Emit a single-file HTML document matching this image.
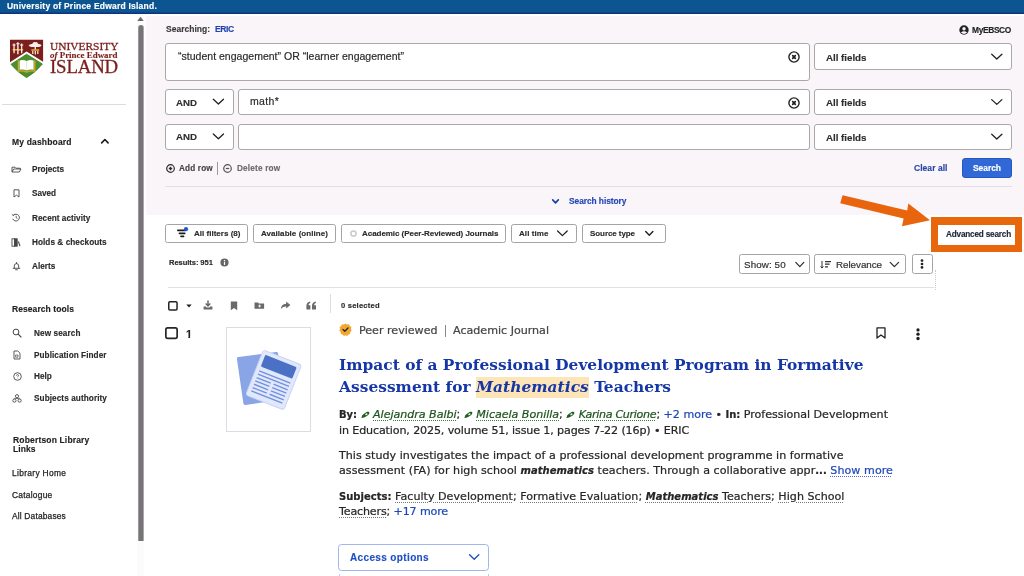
<!DOCTYPE html>
<html lang="en"><head><meta charset="utf-8"><title>EBSCO Advanced search - University of Prince Edward Island</title>
<style>
html,body{margin:0;padding:0;background:#fff;}
body{width:1024px;height:576px;position:relative;overflow:hidden;font-family:"Liberation Sans","DejaVu Sans",sans-serif;}
.t{position:absolute;white-space:nowrap;margin:0;padding:0;will-change:transform;}
.b{position:absolute;box-sizing:border-box;}
svg{position:absolute;overflow:visible;}
.u,.ug,.ub{text-decoration:underline dotted;text-decoration-thickness:1px;text-underline-offset:1.6px;}
.u{text-decoration-color:#777;}
.ug{text-decoration-color:#3b7a3b;}
.ub{text-decoration-color:#4a6fd0;}
.t{-webkit-text-stroke:0.14px currentColor;}
.d{-webkit-text-stroke:0.22px currentColor;}
.d b{font-size:0.9em;}
</style></head><body>
<div class="b" style="left:0px;top:0px;width:1024px;height:13px;background:#0d5590;"></div>
<div class="b" style="left:0px;top:12px;width:1024px;height:1px;background:#0b4587;"></div>
<div class="b" style="left:0px;top:13px;width:1024px;height:1px;background:#0c357d;"></div>
<div class="b" style="left:146px;top:16px;width:878px;height:199px;background:#faf5f9;"></div>
<div class="b" style="left:137px;top:14px;width:7px;height:562px;background:#fbfbfb;"></div>
<div class="b" style="left:138px;top:25px;width:6px;height:516px;background:#767476;border-radius:3px 3px 0 0;border-left:1px solid #9a9a9a;border-right:1px solid #a8a8a8;"></div>
<svg style="left:137px;top:16px" width="7" height="6" viewBox="0 0 7 6"><polygon points="0.3,5 3.5,0.8 6.7,5" fill="#686868"/></svg>
<svg style="left:9px;top:39px" width="36" height="40" viewBox="0 0 36 40">
<path d="M1,0.8 H34.1 V22.8 L17.6,12.6 L1,23.2 Z" fill="#7c1e1b"/>
<path d="M17.6,15.2 L33.4,25 Q26.5,33.5 17.6,38.6 Q8.6,33.5 2,25.3 Z" fill="#4d8f2d" stroke="#3c7d24" stroke-width="0.8" stroke-linejoin="round"/>
<path d="M9.4,21.6 v10.6 q4.2,-1 8.2,0.9 q4,-1.9 8.2,-0.9 v-10.6" fill="none" stroke="#dba722" stroke-width="1.3"/>
<path d="M10.6,21.4 q3.5,-0.9 7,0.5 q3.5,-1.4 7,-0.5 v9.3 q-3.5,-0.8 -7,0.8 q-3.5,-1.6 -7,-0.8 z" fill="#fff"/>
<path d="M17.6,21.9 v9.8" stroke="#d8d2c0" stroke-width="0.6"/>
<rect x="3.6" y="10" width="10.6" height="1.5" fill="#eaab20"/>
<path d="M4.4,4.6 h1.3 v9.6 h-1.3z M8.2,3.2 h1.4 v12 h-1.4z M12,4.6 h1.3 v9.6 h-1.3z M3.4,5.4 h3.3 v1 h-3.3z M7.2,4.2 h3.4 v1 h-3.4z M11,5.4 h3.3 v1 h-3.3z" fill="#f6eeee"/>
<path d="M19.6,6.6 q1.2,-2 3.6,-1.6 q0.8,-2.4 3.2,-1.8 q2,-0.6 2.8,1.8 q2.6,-0.4 3.4,1.6 q-1.2,1.8 -3.6,1.4 h-5.8 q-2.4,0.4 -3.6,-1.4z" fill="#f6eeee"/>
<rect x="22.4" y="10.2" width="7.8" height="1.6" fill="#eaab20"/>
<path d="M23.2,12 h1.2 v3 h-1.2z M25.7,12 h1.2 v3.4 h-1.2z M28.2,12 h1.2 v3 h-1.2z M25.6,7.6 h1.4 v2.6 h-1.4z" fill="#f6eeee"/>
</svg>
<div class="b" style="left:2px;top:104px;width:124px;height:1px;background:#dcdcdc;"></div>
<svg style="left:0;top:0" width="1024" height="576"><polyline points="101.7,142.85 104.9,139.54999999999998 108.10000000000001,142.85" fill="none" stroke="#1a1a1a" stroke-width="1.6" stroke-linecap="round" stroke-linejoin="round"/></svg>
<svg style="left:11px;top:165px" width="11" height="8" viewBox="0 0 11 8"><path d="M1,2.2 h3 l1,1 h4.2 v0.9 M1,2.2 v4.8 h7.3 l1.7,-3 h-7.4 l-1.6,3" fill="none" stroke="#484848" stroke-width="0.9" stroke-linejoin="round"/></svg>
<svg style="left:13px;top:189px" width="7" height="9" viewBox="0 0 7 9"><path d="M1,0.8 h5 v7.2 l-2.5,-1.8 l-2.5,1.8 z" fill="none" stroke="#484848" stroke-width="0.9" stroke-linejoin="round"/></svg>
<svg style="left:11px;top:213px" width="10" height="9" viewBox="0 0 10 9"><path d="M2.4,2.4 a3.4,3.4 0 1 1 -0.6,3.4" fill="none" stroke="#484848" stroke-width="0.9"/><path d="M0.8,1.4 l1.7,1.3 l1,-1.8" fill="none" stroke="#484848" stroke-width="0.8"/><path d="M5.2,2.8 v2 l1.3,0.9" fill="none" stroke="#484848" stroke-width="0.8"/></svg>
<svg style="left:11px;top:237.5px" width="10" height="9" viewBox="0 0 10 9"><rect x="1" y="0.8" width="2.6" height="7.4" fill="none" stroke="#484848" stroke-width="0.9"/><rect x="3.6" y="0.8" width="2.6" height="7.4" fill="#484848" stroke="#484848" stroke-width="0.9"/><path d="M7.4,3.5 l1.6,4.6" stroke="#484848" stroke-width="1.1"/></svg>
<svg style="left:12px;top:261.5px" width="9" height="9" viewBox="0 0 9 9"><path d="M1.2,6.3 h6.6 M2.3,6.2 v-2.2 a2.2,2.4 0 0 1 4.4,0 v2.2 M4.5,1.5 v-1 M3.6,7.8 h1.8" fill="none" stroke="#484848" stroke-width="0.9" stroke-linecap="round"/></svg>
<svg style="left:12px;top:328px" width="10" height="10" viewBox="0 0 10 10"><circle cx="4" cy="4" r="2.9" fill="none" stroke="#484848" stroke-width="1"/><path d="M6.2,6.2 l2.8,2.8" stroke="#484848" stroke-width="1.1" stroke-linecap="round"/></svg>
<svg style="left:13px;top:350px" width="8" height="10" viewBox="0 0 8 10"><path d="M1,1 h3.8 l2.2,2.2 v5.8 h-6 z" fill="none" stroke="#484848" stroke-width="0.9" stroke-linejoin="round"/><path d="M2.6,5 h2.4 v2.2 h-2.4z" fill="none" stroke="#484848" stroke-width="0.7"/></svg>
<svg style="left:12.5px;top:372.3px" width="9" height="9" viewBox="0 0 9 9"><circle cx="4.5" cy="4.5" r="3.8" fill="none" stroke="#484848" stroke-width="0.9"/><path d="M3.5,3.6 a1,1 0 1 1 1.4,0.9 l-0.2,0.7 M4.6,6.4 v0.4" fill="none" stroke="#484848" stroke-width="0.8"/></svg>
<svg style="left:12px;top:393.5px" width="10" height="9" viewBox="0 0 10 9"><circle cx="5" cy="2.2" r="1.6" fill="none" stroke="#484848" stroke-width="0.9"/><circle cx="2.4" cy="6.6" r="1.6" fill="none" stroke="#484848" stroke-width="0.9"/><circle cx="7.6" cy="6.6" r="1.6" fill="none" stroke="#484848" stroke-width="0.9"/><path d="M5,3.8 v1 M2.4,5 v-0.6 h5.2 v0.6" fill="none" stroke="#484848" stroke-width="0.7"/></svg>
<svg style="left:959px;top:24.5px" width="10" height="10" viewBox="0 0 10 10"><circle cx="5" cy="5" r="4.7" fill="#222"/><circle cx="5" cy="3.7" r="1.7" fill="#f9f4f9"/><path d="M1.9,7.6 q3.1,-2.6 6.2,0 q-3.1,2.6 -6.2,0z" fill="#f9f4f9"/></svg>
<div class="b" style="left:165px;top:43px;width:645px;height:37.5px;background:#fff;border:1px solid #a9a9a9;border-radius:3px;"></div>
<div class="b" style="left:814px;top:43px;width:198px;height:26.5px;background:#fff;border:1px solid #a9a9a9;border-radius:3px;"></div>
<svg style="left:0;top:0" width="1024" height="576"><polyline points="991.6999999999999,54.2 996.8,59.0 1001.9,54.2" fill="none" stroke="#222" stroke-width="1.3" stroke-linecap="round" stroke-linejoin="round"/></svg>
<div class="b" style="left:165px;top:89px;width:68.5px;height:26px;background:#fff;border:1px solid #a9a9a9;border-radius:3px;"></div>
<svg style="left:0;top:0" width="1024" height="576"><polyline points="213.3,99.19999999999999 218.4,104.0 223.5,99.19999999999999" fill="none" stroke="#222" stroke-width="1.3" stroke-linecap="round" stroke-linejoin="round"/></svg>
<div class="b" style="left:238px;top:89px;width:572px;height:26px;background:#fff;border:1px solid #a9a9a9;border-radius:3px;"></div>
<div class="b" style="left:814px;top:89px;width:198px;height:26px;background:#fff;border:1px solid #a9a9a9;border-radius:3px;"></div>
<svg style="left:0;top:0" width="1024" height="576"><polyline points="991.6999999999999,99.6 996.8,104.4 1001.9,99.6" fill="none" stroke="#222" stroke-width="1.3" stroke-linecap="round" stroke-linejoin="round"/></svg>
<div class="b" style="left:165px;top:123.5px;width:68.5px;height:26.5px;background:#fff;border:1px solid #a9a9a9;border-radius:3px;"></div>
<svg style="left:0;top:0" width="1024" height="576"><polyline points="213.3,134.0 218.4,138.8 223.5,134.0" fill="none" stroke="#222" stroke-width="1.3" stroke-linecap="round" stroke-linejoin="round"/></svg>
<div class="b" style="left:238px;top:123.5px;width:572px;height:26.5px;background:#fff;border:1px solid #a9a9a9;border-radius:3px;"></div>
<div class="b" style="left:814px;top:123.5px;width:198px;height:26.5px;background:#fff;border:1px solid #a9a9a9;border-radius:3px;"></div>
<svg style="left:0;top:0" width="1024" height="576"><polyline points="991.6999999999999,134.2 996.8,139.0 1001.9,134.2" fill="none" stroke="#222" stroke-width="1.3" stroke-linecap="round" stroke-linejoin="round"/></svg>
<svg style="left:787.5px;top:51px" width="12" height="12" viewBox="0 0 12 12"><circle cx="6" cy="6" r="5.1" fill="none" stroke="#222" stroke-width="1.4"/><path d="M4.7,4.7 l2.6,2.6 M7.3,4.7 l-2.6,2.6" stroke="#222" stroke-width="1.7" stroke-linecap="round"/></svg>
<svg style="left:787.5px;top:97px" width="12" height="12" viewBox="0 0 12 12"><circle cx="6" cy="6" r="5.1" fill="none" stroke="#222" stroke-width="1.4"/><path d="M4.7,4.7 l2.6,2.6 M7.3,4.7 l-2.6,2.6" stroke="#222" stroke-width="1.7" stroke-linecap="round"/></svg>
<svg style="left:165.5px;top:163.7px" width="9" height="9" viewBox="0 0 9 9"><circle cx="4.5" cy="4.5" r="3.8" fill="none" stroke="#2a2a2a" stroke-width="1.2"/><path d="M2.8,4.5 h3.4 M4.5,2.8 v3.4" stroke="#2a2a2a" stroke-width="1.3"/></svg>
<div class="b" style="left:217px;top:162px;width:1px;height:13px;background:#9a9a9a;"></div>
<svg style="left:222.5px;top:163.7px" width="9" height="9" viewBox="0 0 9 9"><circle cx="4.5" cy="4.5" r="3.8" fill="none" stroke="#555" stroke-width="1.2"/><path d="M2.8,4.5 h3.4" stroke="#555" stroke-width="1.3"/></svg>
<div class="b" style="left:962px;top:158px;width:50px;height:20px;background:#3268d6;border:1px solid #2358c6;border-radius:3px;"></div>
<div class="b" style="left:165px;top:186px;width:846.5px;height:1px;background:#e4dde4;"></div>
<svg style="left:0;top:0" width="1024" height="576"><polyline points="552.7,199.8 555.5,202.8 558.3,199.8" fill="none" stroke="#1f41ad" stroke-width="1.7" stroke-linecap="round" stroke-linejoin="round"/></svg>
<svg style="left:0;top:0" width="1024" height="576"><polygon points="842.6,195.2 907.2,210.6 908.3,203.4 930,220.2 902,226.2 903.6,218.6 840.2,203.2" fill="#e8650e"/></svg>
<div class="b" style="left:931px;top:217px;width:91px;height:35px;background:#fff;border:7px solid #e8660c;border-top-width:8px;"></div>
<div class="b" style="left:165px;top:224px;width:83px;height:19px;background:#fff;border:1px solid #a4a4a4;border-radius:2.5px;"></div>
<svg style="left:176.5px;top:227px" width="12" height="12" viewBox="0 0 12 12"><path d="M0.8,3.4 h7.6 M2.4,6.4 h5.4 M4,9.4 h2.6" stroke="#1c1c1c" stroke-width="1.6" stroke-linecap="round"/><circle cx="9" cy="2.2" r="2.1" fill="#1d55d8"/></svg>
<div class="b" style="left:253px;top:224px;width:83px;height:19px;background:#fff;border:1px solid #a4a4a4;border-radius:2.5px;"></div>
<div class="b" style="left:341.3px;top:224px;width:164.7px;height:19px;background:#fff;border:1px solid #a4a4a4;border-radius:2.5px;"></div>
<svg style="left:349.5px;top:230.3px" width="7" height="7" viewBox="0 0 7 7"><circle cx="3.5" cy="3.5" r="2.6" fill="none" stroke="#c9c9c9" stroke-width="1.5"/></svg>
<div class="b" style="left:511px;top:224px;width:66.20000000000005px;height:19px;background:#fff;border:1px solid #a4a4a4;border-radius:2.5px;"></div>
<svg style="left:0;top:0" width="1024" height="576"><polyline points="557.6,231.0 562.4,235.60000000000002 567.1999999999999,231.0" fill="none" stroke="#222" stroke-width="1.3" stroke-linecap="round" stroke-linejoin="round"/></svg>
<div class="b" style="left:582px;top:224px;width:84px;height:19px;background:#fff;border:1px solid #a4a4a4;border-radius:2.5px;"></div>
<svg style="left:0;top:0" width="1024" height="576"><polyline points="645.6999999999999,231.4 649.3,235.20000000000002 652.9,231.4" fill="none" stroke="#222" stroke-width="1.4" stroke-linecap="round" stroke-linejoin="round"/></svg>
<svg style="left:220px;top:258.3px" width="9" height="9" viewBox="0 0 9 9"><circle cx="4.5" cy="4.5" r="4.1" fill="#666"/><rect x="3.9" y="3.9" width="1.2" height="3" fill="#fff"/><rect x="3.9" y="2" width="1.2" height="1.2" fill="#fff"/></svg>
<div class="b" style="left:738.5px;top:254px;width:71.20000000000005px;height:20px;background:#fff;border:1px solid #a4a4a4;border-radius:2.5px;"></div>
<svg style="left:0;top:0" width="1024" height="576"><polyline points="795.8,262.4 799.8,266.6 803.8,262.4" fill="none" stroke="#333" stroke-width="1.3" stroke-linecap="round" stroke-linejoin="round"/></svg>
<div class="b" style="left:814.4px;top:254px;width:92.10000000000002px;height:20px;background:#fff;border:1px solid #a4a4a4;border-radius:2.5px;"></div>
<svg style="left:819.5px;top:259.5px" width="12" height="10" viewBox="0 0 12 10"><path d="M2,1 v7 M0.6,6.4 l1.4,1.7 l1.4,-1.7" fill="none" stroke="#333" stroke-width="1"/><path d="M5,1.6 h6 M5,4.2 h4.6 M5,6.8 h3" stroke="#333" stroke-width="1.2"/></svg>
<svg style="left:0;top:0" width="1024" height="576"><polyline points="890.1999999999999,262.4 894.4,266.6 898.6,262.4" fill="none" stroke="#333" stroke-width="1.3" stroke-linecap="round" stroke-linejoin="round"/></svg>
<div class="b" style="left:911.5px;top:254px;width:21.799999999999955px;height:20px;background:#fff;border:1px solid #a4a4a4;border-radius:2.5px;"></div>
<svg style="left:920.4px;top:259.3px" width="4" height="10" viewBox="0 0 4 10"><circle cx="2" cy="1.6" r="1.35" fill="#222"/><circle cx="2" cy="5" r="1.35" fill="#222"/><circle cx="2" cy="8.4" r="1.35" fill="#222"/></svg>
<div class="b" style="left:168px;top:286.5px;width:766px;height:1.0px;background:#e3dfe6;"></div>
<div class="b" style="left:935px;top:270px;width:0;height:20px;border-left:1px dotted #c8c8c8"></div>
<svg style="left:167.6px;top:300.6px" width="10" height="10" viewBox="0 0 10 10"><rect x="0.75" y="0.75" width="8.3" height="8.3" rx="1.2" fill="#fff" stroke="#242424" stroke-width="1.5"/></svg>
<svg style="left:186px;top:304px" width="6" height="4" viewBox="0 0 6 4"><polygon points="0.3,0.5 5.7,0.5 3,3.5" fill="#222"/></svg>
<svg style="left:203px;top:300px" width="10" height="10" viewBox="0 0 10 10"><path d="M5,0.6 v4.8 M2.7,3.5 l2.3,2.4 l2.3,-2.4" fill="none" stroke="#6a6a6a" stroke-width="1.5"/><path d="M0.6,6.6 h2.2 l1,1 h2.4 l1,-1 h2.2 v2.8 h-8.8 z" fill="#6a6a6a"/></svg>
<svg style="left:230px;top:300.5px" width="8" height="10" viewBox="0 0 8 10"><path d="M0.8,0.5 h6.4 v8.7 l-3.2,-2.2 l-3.2,2.2 z" fill="#6a6a6a"/></svg>
<svg style="left:254px;top:302px" width="11" height="8" viewBox="0 0 11 8"><path d="M0.5,0.6 h3.4 l1,1 h5.2 v5.2 h-9.6 z" fill="#6a6a6a"/><path d="M5.6,2.6 v2.8 M4.2,4 h2.8" stroke="#fff" stroke-width="0.9"/></svg>
<svg style="left:280px;top:300.5px" width="11" height="9" viewBox="0 0 11 9"><path d="M6.2,0.6 l4.2,3.5 l-4.2,3.5 v-2.1 q-3.6,-0.3 -5.4,2.6 q0.3,-4.9 5.4,-5.4 z" fill="#6a6a6a"/></svg>
<svg style="left:305.5px;top:300.6px" width="11" height="9" viewBox="0 0 11 9"><path d="M0.4,8.6 v-4 q0,-3.4 3.8,-4.2 v1.7 q-1.7,0.5 -1.7,2.2 h1.9 v4.3 z M6,8.6 v-4 q0,-3.4 3.8,-4.2 v1.7 q-1.7,0.5 -1.7,2.2 h1.9 v4.3 z" fill="#6a6a6a"/></svg>
<div class="b" style="left:330px;top:294px;width:1px;height:19px;background:#ddd;"></div>
<svg style="left:165px;top:327px" width="13" height="12.4" viewBox="0 0 13 12.4"><rect x="0.85" y="0.85" width="11.3" height="10.5" rx="1.8" fill="#fff" stroke="#26262c" stroke-width="1.7"/></svg>
<div class="b" style="left:225.8px;top:327px;width:85.5px;height:105px;background:#fff;border:1px solid #dfdbe4;"></div>
<svg style="left:225.8px;top:327px" width="86" height="105" viewBox="0 0 86 105">
<path d="M12.4,30 L50.2,24.9 Q51.8,24.7 52,26.3 L58.6,72 L19.4,78 Q17.6,78.2 17.4,76.6 L10.9,31.8 Q10.7,30.2 12.4,30 Z" fill="#89a5e5"/>
<g transform="translate(37.4,22.9) rotate(21.5)">
<rect x="0" y="0" width="41" height="48.4" rx="2.6" fill="#e2e8fb" stroke="#c6d2f6" stroke-width="0.9"/>
<rect x="3.6" y="3.8" width="33.8" height="12.6" rx="1.4" fill="#4b71c7"/>
<g stroke="#7191de" stroke-width="1.35">
<path d="M3.8,21 h33.4 M3.8,24.6 h33.4 M3.8,28.2 h15.2 M22,28.2 h15.2 M3.8,31.8 h15.2 M22,31.8 h15.2 M3.8,35.4 h15.2 M22,35.4 h15.2 M3.8,39 h15.2 M22,39 h15.2 M3.8,42.6 h33.4"/>
</g></g></svg>
<svg style="left:338.5px;top:322.8px" width="13" height="13" viewBox="0 0 13 13"><path d="M6.5,0.4 l1.6,1 1.9,-0.1 0.8,1.7 1.6,1 -0.4,1.9 0.6,1.8 -1.3,1.4 -0.2,1.9 -1.8,0.5 -1.2,1.5 -1.6,-0.7 -1.6,0.7 -1.2,-1.5 -1.8,-0.5 -0.2,-1.9 -1.3,-1.4 0.6,-1.8 -0.4,-1.9 1.6,-1 0.8,-1.7 1.9,0.1 z" fill="#f2a72d"/><path d="M4,6.5 l1.8,1.8 l3.2,-3.4" fill="none" stroke="#2a2a3a" stroke-width="1.4" stroke-linecap="round" stroke-linejoin="round"/></svg>
<div class="b" style="left:444.5px;top:324.5px;width:1.0px;height:12.0px;background:#888;"></div>
<svg style="left:876px;top:327.3px" width="10" height="12" viewBox="0 0 10 12"><path d="M1,0.8 h8 v10.2 l-4,-3 l-4,3 z" fill="none" stroke="#222" stroke-width="1.3" stroke-linejoin="round"/></svg>
<svg style="left:915.5px;top:327.5px" width="4" height="12" viewBox="0 0 4 12"><circle cx="2" cy="1.9" r="1.65" fill="#1c1c1c"/><circle cx="2" cy="6.2" r="1.65" fill="#1c1c1c"/><circle cx="2" cy="10.5" r="1.65" fill="#1c1c1c"/></svg>
<div class="b" style="left:338px;top:544px;width:151px;height:27px;background:#fff;border:1px solid #9fb6ee;border-radius:3.5px;"></div>
<svg style="left:0;top:0" width="1024" height="576"><polyline points="469.59999999999997,554.85 474.2,559.15 478.8,554.85" fill="none" stroke="#1f4fc0" stroke-width="1.4" stroke-linecap="round" stroke-linejoin="round"/></svg>
<div class="b" style="left:338.5px;top:574px;width:1.0px;height:2px;background:#b9c9f2;"></div>
<div class="b" style="left:488px;top:574px;width:1px;height:2px;background:#b9c9f2;"></div>
<div class="t" style="left:7.00px;top:0px;font:normal bold 8.5px/12px 'Liberation Sans', 'DejaVu Sans', sans-serif;color:#fff;letter-spacing:0.223px;">University of Prince Edward Island.</div>
<div class="t" style="left:49.50px;top:39px;font:normal normal 11.4px/14px 'Liberation Serif', 'DejaVu Serif', serif;color:#7a1d1b;letter-spacing:0.016px;-webkit-text-stroke:0.3px #7a1d1b;">UNIVERSITY</div>
<div class="t" style="left:50.00px;top:49px;font:normal bold 8.9px/12px 'Liberation Serif', 'DejaVu Serif', serif;color:#7a1d1b;letter-spacing:0.027px;"><i>of</i> Prince Edward</div>
<div class="t" style="left:50.00px;top:55px;font:normal normal 18.8px/23px 'Liberation Serif', 'DejaVu Serif', serif;color:#7a1d1b;letter-spacing:-0.146px;-webkit-text-stroke:0.3px #7a1d1b;">ISLAND</div>
<div class="t" style="left:11.70px;top:136px;font:normal bold 8.5px/12px 'Liberation Sans', 'DejaVu Sans', sans-serif;color:#1f1f1f;letter-spacing:0.173px;">My dashboard</div>
<div class="t" style="left:32.00px;top:164px;font:normal bold 8.2px/11px 'Liberation Sans', 'DejaVu Sans', sans-serif;color:#2a2a2a;letter-spacing:-0.039px;">Projects</div>
<div class="t" style="left:32.00px;top:188px;font:normal bold 8.2px/11px 'Liberation Sans', 'DejaVu Sans', sans-serif;color:#2a2a2a;letter-spacing:0.000px;">Saved</div>
<div class="t" style="left:32.00px;top:213px;font:normal bold 8.2px/11px 'Liberation Sans', 'DejaVu Sans', sans-serif;color:#2a2a2a;letter-spacing:0.040px;">Recent activity</div>
<div class="t" style="left:32.00px;top:237px;font:normal bold 8.2px/11px 'Liberation Sans', 'DejaVu Sans', sans-serif;color:#2a2a2a;letter-spacing:0.058px;">Holds &amp; checkouts</div>
<div class="t" style="left:32.00px;top:261px;font:normal bold 8.2px/11px 'Liberation Sans', 'DejaVu Sans', sans-serif;color:#2a2a2a;letter-spacing:0.000px;">Alerts</div>
<div class="t" style="left:12.00px;top:303px;font:normal bold 8.5px/12px 'Liberation Sans', 'DejaVu Sans', sans-serif;color:#1f1f1f;letter-spacing:0.075px;">Research tools</div>
<div class="t" style="left:33.50px;top:328px;font:normal bold 8.2px/11px 'Liberation Sans', 'DejaVu Sans', sans-serif;color:#2a2a2a;letter-spacing:0.098px;">New search</div>
<div class="t" style="left:33.50px;top:350px;font:normal bold 8.2px/11px 'Liberation Sans', 'DejaVu Sans', sans-serif;color:#2a2a2a;letter-spacing:0.060px;">Publication Finder</div>
<div class="t" style="left:33.50px;top:371px;font:normal bold 8.2px/11px 'Liberation Sans', 'DejaVu Sans', sans-serif;color:#2a2a2a;letter-spacing:0.000px;">Help</div>
<div class="t" style="left:33.50px;top:393px;font:normal bold 8.2px/11px 'Liberation Sans', 'DejaVu Sans', sans-serif;color:#2a2a2a;letter-spacing:0.087px;">Subjects authority</div>
<div class="t" style="left:12.50px;top:434px;font:normal bold 8.5px/12px 'Liberation Sans', 'DejaVu Sans', sans-serif;color:#1f1f1f;letter-spacing:0.165px;">Robertson Library</div>
<div class="t" style="left:12.50px;top:443px;font:normal bold 8.5px/12px 'Liberation Sans', 'DejaVu Sans', sans-serif;color:#1f1f1f;letter-spacing:0.059px;">Links</div>
<div class="t" style="left:12.00px;top:467px;font:normal normal 8.4px/12px 'Liberation Sans', 'DejaVu Sans', sans-serif;color:#222;letter-spacing:0.335px;-webkit-text-stroke:0.25px #222;">Library Home</div>
<div class="t" style="left:12.00px;top:489px;font:normal normal 8.4px/12px 'Liberation Sans', 'DejaVu Sans', sans-serif;color:#222;letter-spacing:0.257px;-webkit-text-stroke:0.25px #222;">Catalogue</div>
<div class="t" style="left:12.00px;top:510px;font:normal normal 8.4px/12px 'Liberation Sans', 'DejaVu Sans', sans-serif;color:#222;letter-spacing:0.178px;-webkit-text-stroke:0.25px #222;">All Databases</div>
<div class="t" style="left:166.00px;top:23px;font:normal bold 8.5px/12px 'Liberation Sans', 'DejaVu Sans', sans-serif;color:#3a3a3a;letter-spacing:0.006px;">Searching:</div>
<div class="t" style="left:215.00px;top:23px;font:normal bold 8.5px/12px 'Liberation Sans', 'DejaVu Sans', sans-serif;color:#2244b0;letter-spacing:-0.403px;">ERIC</div>
<div class="t" style="left:972.00px;top:24px;font:normal bold 8.4px/12px 'Liberation Sans', 'DejaVu Sans', sans-serif;color:#222;letter-spacing:-0.346px;">MyEBSCO</div>
<div class="t" style="left:177.50px;top:49px;font:normal normal 10.5px/14px 'Liberation Sans', 'DejaVu Sans', sans-serif;color:#2c2c2c;letter-spacing:0.016px;-webkit-text-stroke:0.2px #2c2c2c;">“student engagement” OR “learner engagement”</div>
<div class="t" style="left:825.50px;top:51px;font:normal bold 9.8px/13px 'Liberation Sans', 'DejaVu Sans', sans-serif;color:#2e2e2e;letter-spacing:-0.034px;">All fields</div>
<div class="t" style="left:176.30px;top:96px;font:normal bold 9.7px/13px 'Liberation Sans', 'DejaVu Sans', sans-serif;color:#2e2e2e;letter-spacing:0.000px;">AND</div>
<div class="t" style="left:250.00px;top:94px;font:normal normal 10.5px/14px 'Liberation Sans', 'DejaVu Sans', sans-serif;color:#2c2c2c;letter-spacing:0.352px;-webkit-text-stroke:0.2px #2c2c2c;">math*</div>
<div class="t" style="left:825.50px;top:96px;font:normal bold 9.8px/13px 'Liberation Sans', 'DejaVu Sans', sans-serif;color:#2e2e2e;letter-spacing:-0.034px;">All fields</div>
<div class="t" style="left:176.30px;top:130px;font:normal bold 9.7px/13px 'Liberation Sans', 'DejaVu Sans', sans-serif;color:#2e2e2e;letter-spacing:0.000px;">AND</div>
<div class="t" style="left:825.50px;top:131px;font:normal bold 9.8px/13px 'Liberation Sans', 'DejaVu Sans', sans-serif;color:#2e2e2e;letter-spacing:-0.034px;">All fields</div>
<div class="t" style="left:179.20px;top:163px;font:normal bold 8.2px/11px 'Liberation Sans', 'DejaVu Sans', sans-serif;color:#444;letter-spacing:0.150px;">Add row</div>
<div class="t" style="left:237.00px;top:163px;font:normal bold 8.2px/11px 'Liberation Sans', 'DejaVu Sans', sans-serif;color:#6a6a6a;letter-spacing:0.189px;">Delete row</div>
<div class="t" style="left:913.50px;top:162px;font:normal bold 8.5px/12px 'Liberation Sans', 'DejaVu Sans', sans-serif;color:#2747a8;letter-spacing:0.047px;">Clear all</div>
<div class="t" style="left:973.00px;top:162px;font:normal bold 8.5px/12px 'Liberation Sans', 'DejaVu Sans', sans-serif;color:#fff;letter-spacing:-0.060px;">Search</div>
<div class="t" style="left:569.00px;top:195px;font:normal bold 8.4px/12px 'Liberation Sans', 'DejaVu Sans', sans-serif;color:#2247b5;letter-spacing:-0.056px;">Search history</div>
<div class="t" style="left:946.00px;top:229px;font:normal bold 8.2px/11px 'Liberation Sans', 'DejaVu Sans', sans-serif;color:#1c2238;letter-spacing:-0.188px;">Advanced search</div>
<div class="t" style="left:193.50px;top:228px;font:normal bold 8px/11px 'Liberation Sans', 'DejaVu Sans', sans-serif;color:#2a2a2a;letter-spacing:0.018px;">All filters (8)</div>
<div class="t" style="left:261.00px;top:228px;font:normal bold 8px/11px 'Liberation Sans', 'DejaVu Sans', sans-serif;color:#2a2a2a;letter-spacing:0.059px;">Available (online)</div>
<div class="t" style="left:361.60px;top:228px;font:normal bold 8px/11px 'Liberation Sans', 'DejaVu Sans', sans-serif;color:#2a2a2a;letter-spacing:-0.044px;">Academic (Peer-Reviewed) Journals</div>
<div class="t" style="left:519.20px;top:228px;font:normal bold 8px/11px 'Liberation Sans', 'DejaVu Sans', sans-serif;color:#2a2a2a;letter-spacing:0.074px;">All time</div>
<div class="t" style="left:590.20px;top:228px;font:normal bold 8px/11px 'Liberation Sans', 'DejaVu Sans', sans-serif;color:#2a2a2a;letter-spacing:-0.072px;">Source type</div>
<div class="t" style="left:169.00px;top:257px;font:normal bold 7.6px/11px 'Liberation Sans', 'DejaVu Sans', sans-serif;color:#2a2a2a;letter-spacing:-0.079px;">Results: 951</div>
<div class="t" style="left:744.30px;top:258px;font:normal normal 9.8px/13px 'Liberation Sans', 'DejaVu Sans', sans-serif;color:#333;letter-spacing:0.105px;-webkit-text-stroke:0.2px #333;">Show: 50</div>
<div class="t" style="left:836.40px;top:258px;font:normal normal 9.8px/13px 'Liberation Sans', 'DejaVu Sans', sans-serif;color:#333;letter-spacing:-0.033px;-webkit-text-stroke:0.2px #333;">Relevance</div>
<div class="t" style="left:340.50px;top:300px;font:normal bold 7.6px/11px 'Liberation Sans', 'DejaVu Sans', sans-serif;color:#2a2a2a;letter-spacing:0.207px;">0 selected</div>
<div class="t" style="left:185.60px;top:327px;font:normal bold 10.9px/14px 'Liberation Sans', 'DejaVu Sans', sans-serif;color:#222;letter-spacing:0.000px;clip-path:polygon(0 0,100% 0,100% 64%,68% 64%,68% 100%,38% 100%,38% 64%,0 64%);">1</div>
<div class="t d" style="left:359.30px;top:323px;font:normal normal 11.1px/15px 'DejaVu Sans', 'Liberation Sans', sans-serif;color:#444;letter-spacing:-0.007px;">Peer reviewed</div>
<div class="t d" style="left:453.00px;top:323px;font:normal normal 11.1px/15px 'DejaVu Sans', 'Liberation Sans', sans-serif;color:#444;letter-spacing:-0.003px;">Academic Journal</div>
<div class="t" style="left:339.00px;top:355px;font:normal bold 15.4px/20px 'DejaVu Serif', 'Liberation Serif', serif;color:#1536a6;letter-spacing:0.017px;-webkit-text-stroke:0;">Impact of a Professional Development Program in Formative</div>
<div class="t" style="left:339.00px;top:377px;font:normal bold 15.4px/20px 'DejaVu Serif', 'Liberation Serif', serif;color:#1536a6;letter-spacing:0.035px;-webkit-text-stroke:0;">Assessment for <span style="background:#fde5b7;font-style:italic;padding:1px 0 2px">Mathematics</span> Teachers</div>
<div class="t d" style="left:339.00px;top:407px;font:normal normal 11.1px/15px 'DejaVu Sans', 'Liberation Sans', sans-serif;color:#262626;letter-spacing:-0.029px;"><b>By:</b> <i style="color:#1a521a"><svg style="position:static;display:inline-block;vertical-align:-1px" width="9" height="8" viewBox="0 0 9 8"><path d="M0.4,7 q0.2,-3.4 3,-4.6 l2.6,-1.6 q2.4,-0.6 2.4,1.2 q-0.6,2.6 -3.4,3.6 q-2.2,1.6 -4.6,1.4z" fill="#1f5c1f"/><ellipse cx="5.4" cy="3.3" rx="1.3" ry="0.8" transform="rotate(-30 5.4 3.3)" fill="#eef5ee"/></svg> <span class="ug">Alejandra Balbi</span></i>; <i style="color:#1a521a"><svg style="position:static;display:inline-block;vertical-align:-1px" width="9" height="8" viewBox="0 0 9 8"><path d="M0.4,7 q0.2,-3.4 3,-4.6 l2.6,-1.6 q2.4,-0.6 2.4,1.2 q-0.6,2.6 -3.4,3.6 q-2.2,1.6 -4.6,1.4z" fill="#1f5c1f"/><ellipse cx="5.4" cy="3.3" rx="1.3" ry="0.8" transform="rotate(-30 5.4 3.3)" fill="#eef5ee"/></svg> <span class="ug">Micaela Bonilla</span></i>; <i style="color:#1a521a"><svg style="position:static;display:inline-block;vertical-align:-1px" width="9" height="8" viewBox="0 0 9 8"><path d="M0.4,7 q0.2,-3.4 3,-4.6 l2.6,-1.6 q2.4,-0.6 2.4,1.2 q-0.6,2.6 -3.4,3.6 q-2.2,1.6 -4.6,1.4z" fill="#1f5c1f"/><ellipse cx="5.4" cy="3.3" rx="1.3" ry="0.8" transform="rotate(-30 5.4 3.3)" fill="#eef5ee"/></svg> <span class="ug" style="letter-spacing:-0.3px">Karina Curione</span></i>; <span style="color:#1f49b8">+2 more</span> • <b>In:</b> Professional Development</div>
<div class="t d" style="left:339.00px;top:423px;font:normal normal 11.1px/15px 'DejaVu Sans', 'Liberation Sans', sans-serif;color:#262626;letter-spacing:-0.127px;">in Education, 2025, volume 51, issue 1, pages 7-22 (16p) • ERIC</div>
<div class="t d" style="left:339.00px;top:448px;font:normal normal 11.1px/15px 'DejaVu Sans', 'Liberation Sans', sans-serif;color:#262626;letter-spacing:0.022px;">This study investigates the impact of a professional development programme in formative</div>
<div class="t d" style="left:339.00px;top:463px;font:normal normal 11.1px/15px 'DejaVu Sans', 'Liberation Sans', sans-serif;color:#262626;letter-spacing:0.045px;">assessment (FA) for high school <b><i>mathematics</i></b> teachers. Through a collaborative appr<b>...</b> <span class="ub" style="color:#1f49b8">Show more</span></div>
<div class="t d" style="left:339.00px;top:489px;font:normal normal 11.1px/15px 'DejaVu Sans', 'Liberation Sans', sans-serif;color:#262626;letter-spacing:0.023px;"><b>Subjects:</b> <span class="u">Faculty Development</span>; <span class="u">Formative Evaluation</span>; <span class="u"><b><i>Mathematics</i></b> Teachers</span>; <span class="u">High School</span></div>
<div class="t d" style="left:339.00px;top:504px;font:normal normal 11.1px/15px 'DejaVu Sans', 'Liberation Sans', sans-serif;color:#262626;letter-spacing:-0.154px;"><span class="u">Teachers</span>; <span style="color:#1f49b8">+17 more</span></div>
<div class="t" style="left:350.00px;top:551px;font:normal bold 10px/13px 'Liberation Sans', 'DejaVu Sans', sans-serif;color:#1f4fc0;letter-spacing:0.363px;">Access options</div>
</body></html>
